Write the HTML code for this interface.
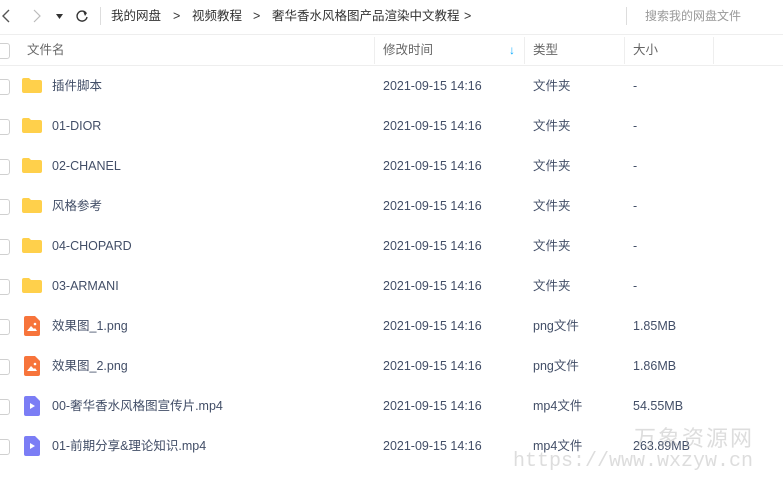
<!DOCTYPE html>
<html><head><meta charset="utf-8"><style>
body{margin:0;width:783px;height:497px;background:#fff;font-family:"Liberation Sans","Noto Sans CJK SC",sans-serif;overflow:hidden;position:relative;color:#424e67}
.a{position:absolute;white-space:nowrap}
.top{font-size:12.5px;color:#333;top:0;height:32px;line-height:32px}
.hd{position:absolute;top:35px;height:30px;line-height:30px;font-size:12.5px;color:#666;white-space:nowrap}
.row{position:absolute;left:0;width:783px;height:40px;font-size:12.5px;color:#424e67}
.row span{position:absolute;top:0;height:40px;line-height:40px;white-space:nowrap}
.cb{position:absolute;left:-6px;top:13px;width:14px;height:14px;border:1px solid #d0d0d0;border-radius:3px}
.fold{position:absolute;left:22px;top:12px;width:20px;height:15px}
</style></head><body>
<svg class="a" style="left:0;top:8px" width="90" height="16"><path d="M9 2 L3 8 L9 14" fill="none" stroke="#555" stroke-width="1.4"/><path d="M34 2 L40 8 L34 14" fill="none" stroke="#bbb" stroke-width="1.2"/><path d="M56 6 L63 6 L59.5 11Z" fill="#333"/><path d="M86 5 A5 5 0 1 0 87 9" fill="none" stroke="#333" stroke-width="1.4"/><path d="M83 3 L87 5 L85 8" fill="#333"/></svg>
<div class="a" style="left:100px;top:7px;width:1px;height:18px;background:#ddd"></div>
<div class="a top" style="left:111px">我的网盘</div>
<div class="a top" style="left:173px">&gt;</div>
<div class="a top" style="left:192px">视频教程</div>
<div class="a top" style="left:253px">&gt;</div>
<div class="a top" style="left:272px">奢华香水风格图产品渲染中文教程</div>
<div class="a top" style="left:464px">&gt;</div>
<div class="a" style="left:626px;top:7px;width:1px;height:18px;background:#ddd"></div>
<div class="a top" style="left:645px;color:#999;font-size:12px">搜索我的网盘文件</div>
<div class="a" style="left:0;top:34px;width:783px;height:1px;background:#eee"></div>
<div class="a" style="left:0;top:65px;width:783px;height:1px;background:#eee"></div>
<div class="cb" style="top:43px"></div>
<div class="hd" style="left:27px">文件名</div>
<div class="a" style="left:374px;top:37px;width:1px;height:27px;background:#eee"></div>
<div class="hd" style="left:383px">修改时间</div>
<div class="hd" style="left:509px;font-size:12px;color:#09aaff;font-weight:bold">↓</div>
<div class="a" style="left:524px;top:37px;width:1px;height:27px;background:#eee"></div>
<div class="hd" style="left:533px">类型</div>
<div class="a" style="left:624px;top:37px;width:1px;height:27px;background:#eee"></div>
<div class="hd" style="left:633px">大小</div>
<div class="a" style="left:713px;top:37px;width:1px;height:27px;background:#eee"></div>

<div class="row" style="top:66px"><div class="cb"></div><svg class="fold" viewBox="0 0 20 15"><path d="M0 2 Q0 0 2 0 H7 L9 2 H18 Q20 2 20 4 V13 Q20 15 18 15 H2 Q0 15 0 13Z" fill="#ffd04b"/></svg><span style="left:52px">插件脚本</span><span style="left:383px">2021-09-15 14:16</span><span style="left:533px">文件夹</span><span style="left:633px">-</span></div>
<div class="row" style="top:106px"><div class="cb"></div><svg class="fold" viewBox="0 0 20 15"><path d="M0 2 Q0 0 2 0 H7 L9 2 H18 Q20 2 20 4 V13 Q20 15 18 15 H2 Q0 15 0 13Z" fill="#ffd04b"/></svg><span style="left:52px">01-DIOR</span><span style="left:383px">2021-09-15 14:16</span><span style="left:533px">文件夹</span><span style="left:633px">-</span></div>
<div class="row" style="top:146px"><div class="cb"></div><svg class="fold" viewBox="0 0 20 15"><path d="M0 2 Q0 0 2 0 H7 L9 2 H18 Q20 2 20 4 V13 Q20 15 18 15 H2 Q0 15 0 13Z" fill="#ffd04b"/></svg><span style="left:52px">02-CHANEL</span><span style="left:383px">2021-09-15 14:16</span><span style="left:533px">文件夹</span><span style="left:633px">-</span></div>
<div class="row" style="top:186px"><div class="cb"></div><svg class="fold" viewBox="0 0 20 15"><path d="M0 2 Q0 0 2 0 H7 L9 2 H18 Q20 2 20 4 V13 Q20 15 18 15 H2 Q0 15 0 13Z" fill="#ffd04b"/></svg><span style="left:52px">风格参考</span><span style="left:383px">2021-09-15 14:16</span><span style="left:533px">文件夹</span><span style="left:633px">-</span></div>
<div class="row" style="top:226px"><div class="cb"></div><svg class="fold" viewBox="0 0 20 15"><path d="M0 2 Q0 0 2 0 H7 L9 2 H18 Q20 2 20 4 V13 Q20 15 18 15 H2 Q0 15 0 13Z" fill="#ffd04b"/></svg><span style="left:52px">04-CHOPARD</span><span style="left:383px">2021-09-15 14:16</span><span style="left:533px">文件夹</span><span style="left:633px">-</span></div>
<div class="row" style="top:266px"><div class="cb"></div><svg class="fold" viewBox="0 0 20 15"><path d="M0 2 Q0 0 2 0 H7 L9 2 H18 Q20 2 20 4 V13 Q20 15 18 15 H2 Q0 15 0 13Z" fill="#ffd04b"/></svg><span style="left:52px">03-ARMANI</span><span style="left:383px">2021-09-15 14:16</span><span style="left:533px">文件夹</span><span style="left:633px">-</span></div>
<div class="row" style="top:306px"><div class="cb"></div><svg class="a" style="left:24px;top:10px" width="16" height="20"><path d="M2 0 H11 L16 5 V18 Q16 20 14 20 H2 Q0 20 0 18 V2 Q0 0 2 0Z" fill="#f7743b"/><path d="M3 15 L7 10 L10 13 L11 12 L13 15Z" fill="#fff"/><circle cx="11" cy="8" r="1.3" fill="#fff"/></svg><span style="left:52px">效果图_1.png</span><span style="left:383px">2021-09-15 14:16</span><span style="left:533px">png文件</span><span style="left:633px">1.85MB</span></div>
<div class="row" style="top:346px"><div class="cb"></div><svg class="a" style="left:24px;top:10px" width="16" height="20"><path d="M2 0 H11 L16 5 V18 Q16 20 14 20 H2 Q0 20 0 18 V2 Q0 0 2 0Z" fill="#f7743b"/><path d="M3 15 L7 10 L10 13 L11 12 L13 15Z" fill="#fff"/><circle cx="11" cy="8" r="1.3" fill="#fff"/></svg><span style="left:52px">效果图_2.png</span><span style="left:383px">2021-09-15 14:16</span><span style="left:533px">png文件</span><span style="left:633px">1.86MB</span></div>
<div class="row" style="top:386px"><div class="cb"></div><svg class="a" style="left:24px;top:10px" width="16" height="20"><path d="M2 0 H11 L16 5 V18 Q16 20 14 20 H2 Q0 20 0 18 V2 Q0 0 2 0Z" fill="#7b7df5"/><path d="M6 7 L11 10 L6 13Z" fill="#fff"/></svg><span style="left:52px">00-奢华香水风格图宣传片.mp4</span><span style="left:383px">2021-09-15 14:16</span><span style="left:533px">mp4文件</span><span style="left:633px">54.55MB</span></div>
<div class="row" style="top:426px"><div class="cb"></div><svg class="a" style="left:24px;top:10px" width="16" height="20"><path d="M2 0 H11 L16 5 V18 Q16 20 14 20 H2 Q0 20 0 18 V2 Q0 0 2 0Z" fill="#7b7df5"/><path d="M6 7 L11 10 L6 13Z" fill="#fff"/></svg><span style="left:52px">01-前期分享&amp;理论知识.mp4</span><span style="left:383px">2021-09-15 14:16</span><span style="left:533px">mp4文件</span><span style="left:633px">263.89MB</span></div>

<div class="a" style="left:634px;top:421px;font-size:22px;color:rgba(180,180,180,0.45);letter-spacing:2px">万象资源网</div>
<div class="a" style="left:513px;top:450px;font-size:20px;color:rgba(180,180,180,0.45);font-family:'Liberation Mono',monospace">https://www.wxzyw.cn</div>
</body></html>
